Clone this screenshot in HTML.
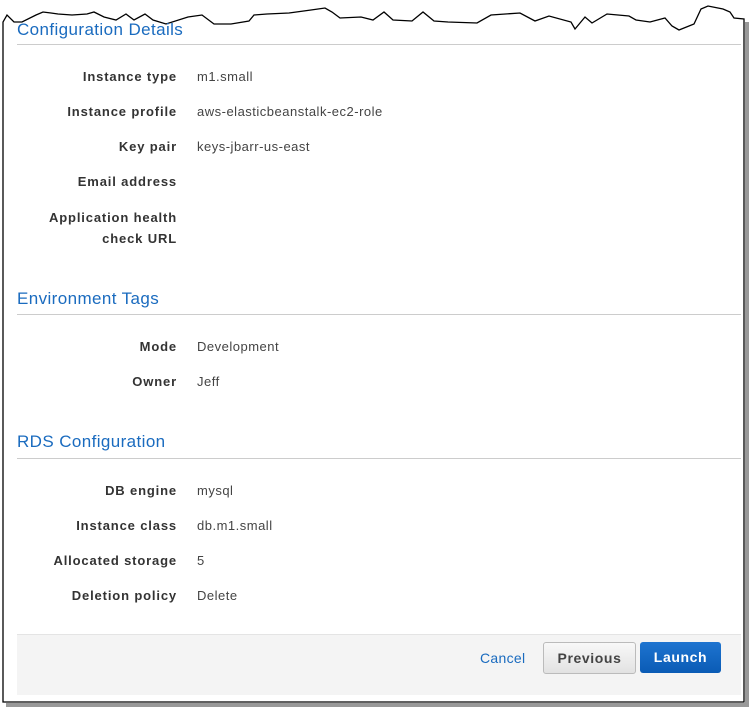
<!DOCTYPE html>
<html><head><style>
body{margin:0;width:756px;height:711px;background:#fff;position:relative;overflow:hidden;font-family:"Liberation Sans",Arial,sans-serif;}
.a{position:absolute}
.l{position:absolute;right:579px;font-weight:bold;font-size:13px;color:#333;text-align:right;white-space:nowrap;letter-spacing:.85px}
.v{position:absolute;left:197px;font-size:13px;color:#444;white-space:nowrap;letter-spacing:.5px}
.h{position:absolute;left:17px;font-size:17px;color:#1a6bbf;letter-spacing:.4px}
.r{position:absolute;left:17px;width:724px;height:1px;background:#ccc}
</style></head><body>
<svg class="a" style="left:0;top:0" width="756" height="711">
<path d="M3,702 L3,22 L7,15 L14,22 L22,22 L36,15 L43,12 L51,13 L58,14 L72,15 L87,14 L94,12 L104,17 L116,20 L126,14 L134,20 L145,14 L153,20 L166,24 L188,17 L202,15 L214,24 L231,24 L249,21 L254,15 L267,14 L289,13 L311,10 L325,8 L332,12 L340,18 L361,17 L373,20 L384,12 L393,20 L412,21 L423,12 L434,21 L448,22 L477,23 L491,15 L520,13 L535,21 L549,16 L571,22 L575,29 L585,17 L592,23 L607,14 L629,16 L636,20 L650,22 L665,18 L672,26 L679,30 L694,24 L701,9 L708,6 L723,9 L730,12 L734,18 L744,19 L744,702 Z" fill="#fff" stroke="#000" stroke-width="1.3"/>
<rect x="745" y="22" width="4" height="684" fill="#999"/>
<rect x="6" y="703" width="743" height="4" fill="#999"/>
</svg>
<div class="h" style="top:20px">Configuration Details</div>
<div class="r" style="top:44px"></div>
<div class="l" style="top:69px">Instance type</div><div class="v" style="top:69px">m1.small</div>
<div class="l" style="top:104px">Instance profile</div><div class="v" style="top:104px">aws-elasticbeanstalk-ec2-role</div>
<div class="l" style="top:139px">Key pair</div><div class="v" style="top:139px">keys-jbarr-us-east</div>
<div class="l" style="top:174px">Email address</div>
<div class="l" style="top:207px;line-height:21px">Application health<br>check URL</div>
<div class="h" style="top:289px">Environment Tags</div>
<div class="r" style="top:314px"></div>
<div class="l" style="top:339px">Mode</div><div class="v" style="top:339px">Development</div>
<div class="l" style="top:374px">Owner</div><div class="v" style="top:374px">Jeff</div>
<div class="h" style="top:432px">RDS Configuration</div>
<div class="r" style="top:458px"></div>
<div class="l" style="top:483px">DB engine</div><div class="v" style="top:483px">mysql</div>
<div class="l" style="top:518px">Instance class</div><div class="v" style="top:518px">db.m1.small</div>
<div class="l" style="top:553px">Allocated storage</div><div class="v" style="top:553px">5</div>
<div class="l" style="top:588px">Deletion policy</div><div class="v" style="top:588px">Delete</div>
<div class="a" style="left:17px;top:634px;width:724px;height:60px;background:#f4f4f4;border-top:1px solid #e4e4e4"></div>
<div class="a" style="left:480px;top:650px;font-size:14px;color:#1a6bbf;letter-spacing:.3px">Cancel</div>
<div class="a" style="left:543px;top:642px;width:91px;height:30px;border:1px solid #bbb;border-radius:3px;background:linear-gradient(#f8f8f8,#e2e2e2);font-weight:bold;font-size:14px;color:#444;text-align:center;line-height:30px;letter-spacing:.6px">Previous</div>
<div class="a" style="left:640px;top:642px;width:81px;height:31px;border-radius:3px;background:linear-gradient(#1e74d0,#0a5bb5);font-weight:bold;font-size:14px;color:#fff;text-align:center;line-height:31px;letter-spacing:.6px">Launch</div>
</body></html>
